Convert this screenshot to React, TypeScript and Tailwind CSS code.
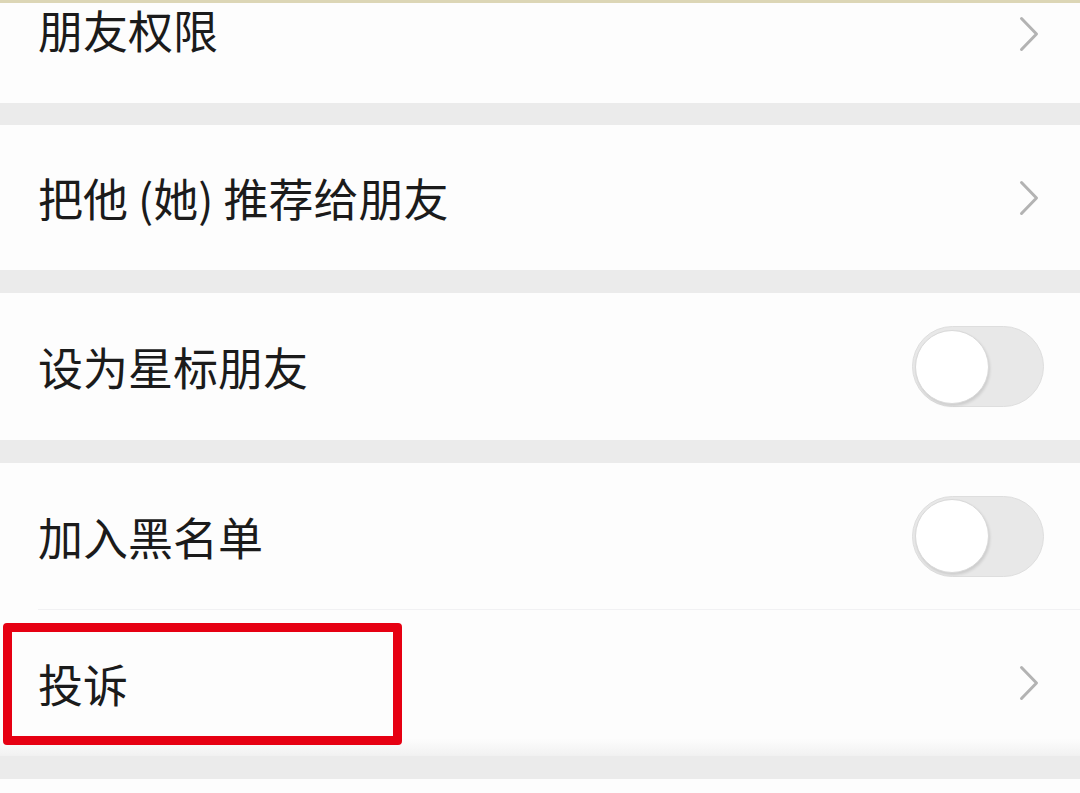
import type { ReactNode } from 'react'

const FONT = '"Noto Sans CJK SC", "Noto Sans", sans-serif'

function Chevron({ className = '' }: { className?: string }) {
  return (
    <svg width="20" height="36" viewBox="0 0 20 36" className={`mr-[41px] ${className}`}>
      <path d="M2.5 2.5 L17.5 18 L2.5 33.5" fill="none" stroke="#b3b3b3" strokeWidth="3" strokeLinecap="round" strokeLinejoin="round" />
    </svg>
  )
}

function Toggle() {
  return (
    <div className="mr-[36px] flex h-[81px] w-[132px] items-center rounded-full border border-[#dedede] bg-[#e8e8e8] px-[2px]">
      <div className="h-[74px] w-[74px] rounded-full border border-[#d9d9d9] bg-white shadow-[1px_2px_3px_rgba(0,0,0,0.12)]" />
    </div>
  )
}

function Row({
  label,
  right,
  height,
  className = 'items-center',
  children,
}: {
  label: string
  right: ReactNode
  height: string
  className?: string
  children?: ReactNode
}) {
  return (
    <div className={`relative flex justify-between bg-[#fdfdfd] pl-[38px] ${height} ${className}`}>
      <span className="text-[45px] leading-none text-[#1b1b1b]" style={{ fontFamily: FONT }}>
        {label}
      </span>
      {right}
      {children}
    </div>
  )
}

function Gap({ height }: { height: string }) {
  return <div className={`bg-[#ebebeb] ${height}`} />
}

export default function App() {
  return (
    <div className="h-[793px] w-[1080px] overflow-hidden bg-[#fdfdfd]">
      <div className="h-[3px] bg-[#dcd6b6]" />
      <Row
        label="朋友权限"
        right={<Chevron className="mt-[9px]" />}
        height="h-[100px]"
        className="items-start pt-[4px]"
      />
      <Gap height="h-[22px]" />
      <Row label="把他 (她) 推荐给朋友" right={<Chevron />} height="h-[145px]" />
      <Gap height="h-[23px]" />
      <Row label="设为星标朋友" right={<Toggle />} height="h-[147px]" />
      <Gap height="h-[23px]" />
      <Row label="加入黑名单" right={<Toggle />} height="h-[146px]" />
      <div className="ml-[38px] h-px bg-[#f1f1f3]" />
      <Row
        label="投诉"
        right={<Chevron />}
        height="h-[146px]"
        className="items-center bg-gradient-to-b from-[#fdfdfd] from-[88%] to-[#f1f1f1]"
      >
        <div className="absolute left-[3px] top-[13px] h-[122px] w-[399px] rounded-[4px] border-[9px] border-[#e60012]" />
      </Row>
      <Gap height="h-[23px]" />
    </div>
  )
}
